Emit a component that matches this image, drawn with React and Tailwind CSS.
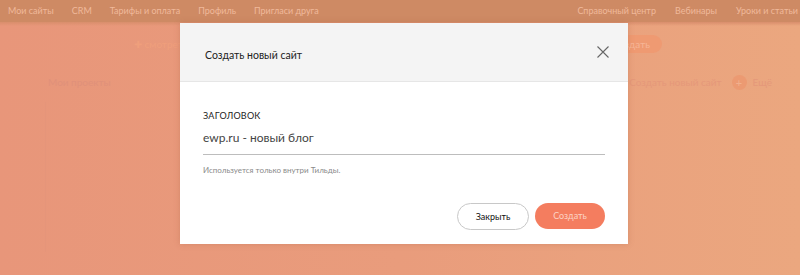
import React from 'react';

const font = { fontFamily: 'Lato, "Noto Sans", sans-serif' };

function TopNav() {
  return (
    <div className="h-[22px] bg-[#ce8a64] flex items-center justify-between pl-2 pr-[2px] text-[9px] text-[#f0b99b] whitespace-nowrap">
      <div className="flex items-center gap-[18px]">
        <span>Мои сайты</span>
        <span>CRM</span>
        <span>Тарифы и оплата</span>
        <span>Профиль</span>
        <span>Пригласи друга</span>
      </div>
      <div className="flex items-center gap-[19px]">
        <span>Справочный центр</span>
        <span>Вебинары</span>
        <span>Уроки и статьи</span>
      </div>
    </div>
  );
}

function Backdrop() {
  return (
    <div className="h-[253px] bg-gradient-to-r from-[#e8967a] via-[#e99c7c] to-[#eba77f] relative">
      <div className="h-[4px] bg-gradient-to-b from-[#d98e6c] to-transparent" />
      <div className="flex items-center h-[36px] pl-[134px] pr-[138px] justify-between">
        <span className="text-[10px] text-[#ef9f7c]">✚ смотреть видео</span>
        <span className="h-[18px] px-3 rounded-full bg-[#ef9a72] text-[10px] text-[#f6b596] flex items-center">
          Создать
        </span>
      </div>
      <div className="flex items-center h-[40px] pl-[48px] pr-[28px] justify-between text-[10px]">
        <span className="text-[#e0917a]">Мои проекты</span>
        <div className="flex items-center gap-[10px] text-[#e5987a]">
          <span>Создать новый сайт</span>
          <span className="flex items-center gap-[6px]">
            <span className="w-[15px] h-[15px] rounded-full bg-[#ec9a72] text-[#f1b08e] flex items-center justify-center text-[11px] leading-none">+</span>
            Ещё
          </span>
        </div>
      </div>
      <div className="mx-[45px] h-[150px] border-l border-[#e5957a]" />
    </div>
  );
}

function Modal() {
  return (
    <div className="absolute left-[180px] top-[23px] w-[448px] h-[221px] bg-white shadow-[0_0_6px_rgba(150,80,50,0.25)] flex flex-col">
      <div className="h-[59px] bg-[#f4f4f4] border-b border-[#e6e6e6] flex items-center justify-between pl-[25px] pr-[19px]">
        <span className="text-[10.5px] text-[#222] pt-[8px]">Создать новый сайт</span>
        <svg width="12" height="12" viewBox="0 0 12 12">
          <path d="M0.5 0.5L11.5 11.5M11.5 0.5L0.5 11.5" stroke="#666" strokeWidth="1.1" />
        </svg>
      </div>
      <div className="px-[23px] pt-[28px] flex-1 flex flex-col">
        <span className="text-[9px] tracking-wide text-[#222] leading-[12px]">ЗАГОЛОВОК</span>
        <div className="mt-[2px] pb-[6px] border-b border-[#bdbdbd]">
          <span className="text-[12px] text-[#444] leading-[16px]">ewp.ru - новый блог</span>
        </div>
        <span className="mt-[10px] text-[8px] text-[#8a8a8a] leading-[10px]">Используется только внутри Тильды.</span>
        <div className="mt-[28px] flex justify-end gap-[6px]">
          <button className="w-[72px] h-[27px] rounded-full border border-[#c8c8c8] bg-white text-[9px] text-[#111]">
            Закрыть
          </button>
          <button className="w-[70px] h-[26px] rounded-full bg-[#f47d5f] text-[9px] text-[#fcd3c4]">
            Создать
          </button>
        </div>
      </div>
    </div>
  );
}

export default function App() {
  return (
    <div className="w-[800px] h-[275px] relative overflow-hidden" style={font}>
      <TopNav />
      <Backdrop />
      <Modal />
    </div>
  );
}
